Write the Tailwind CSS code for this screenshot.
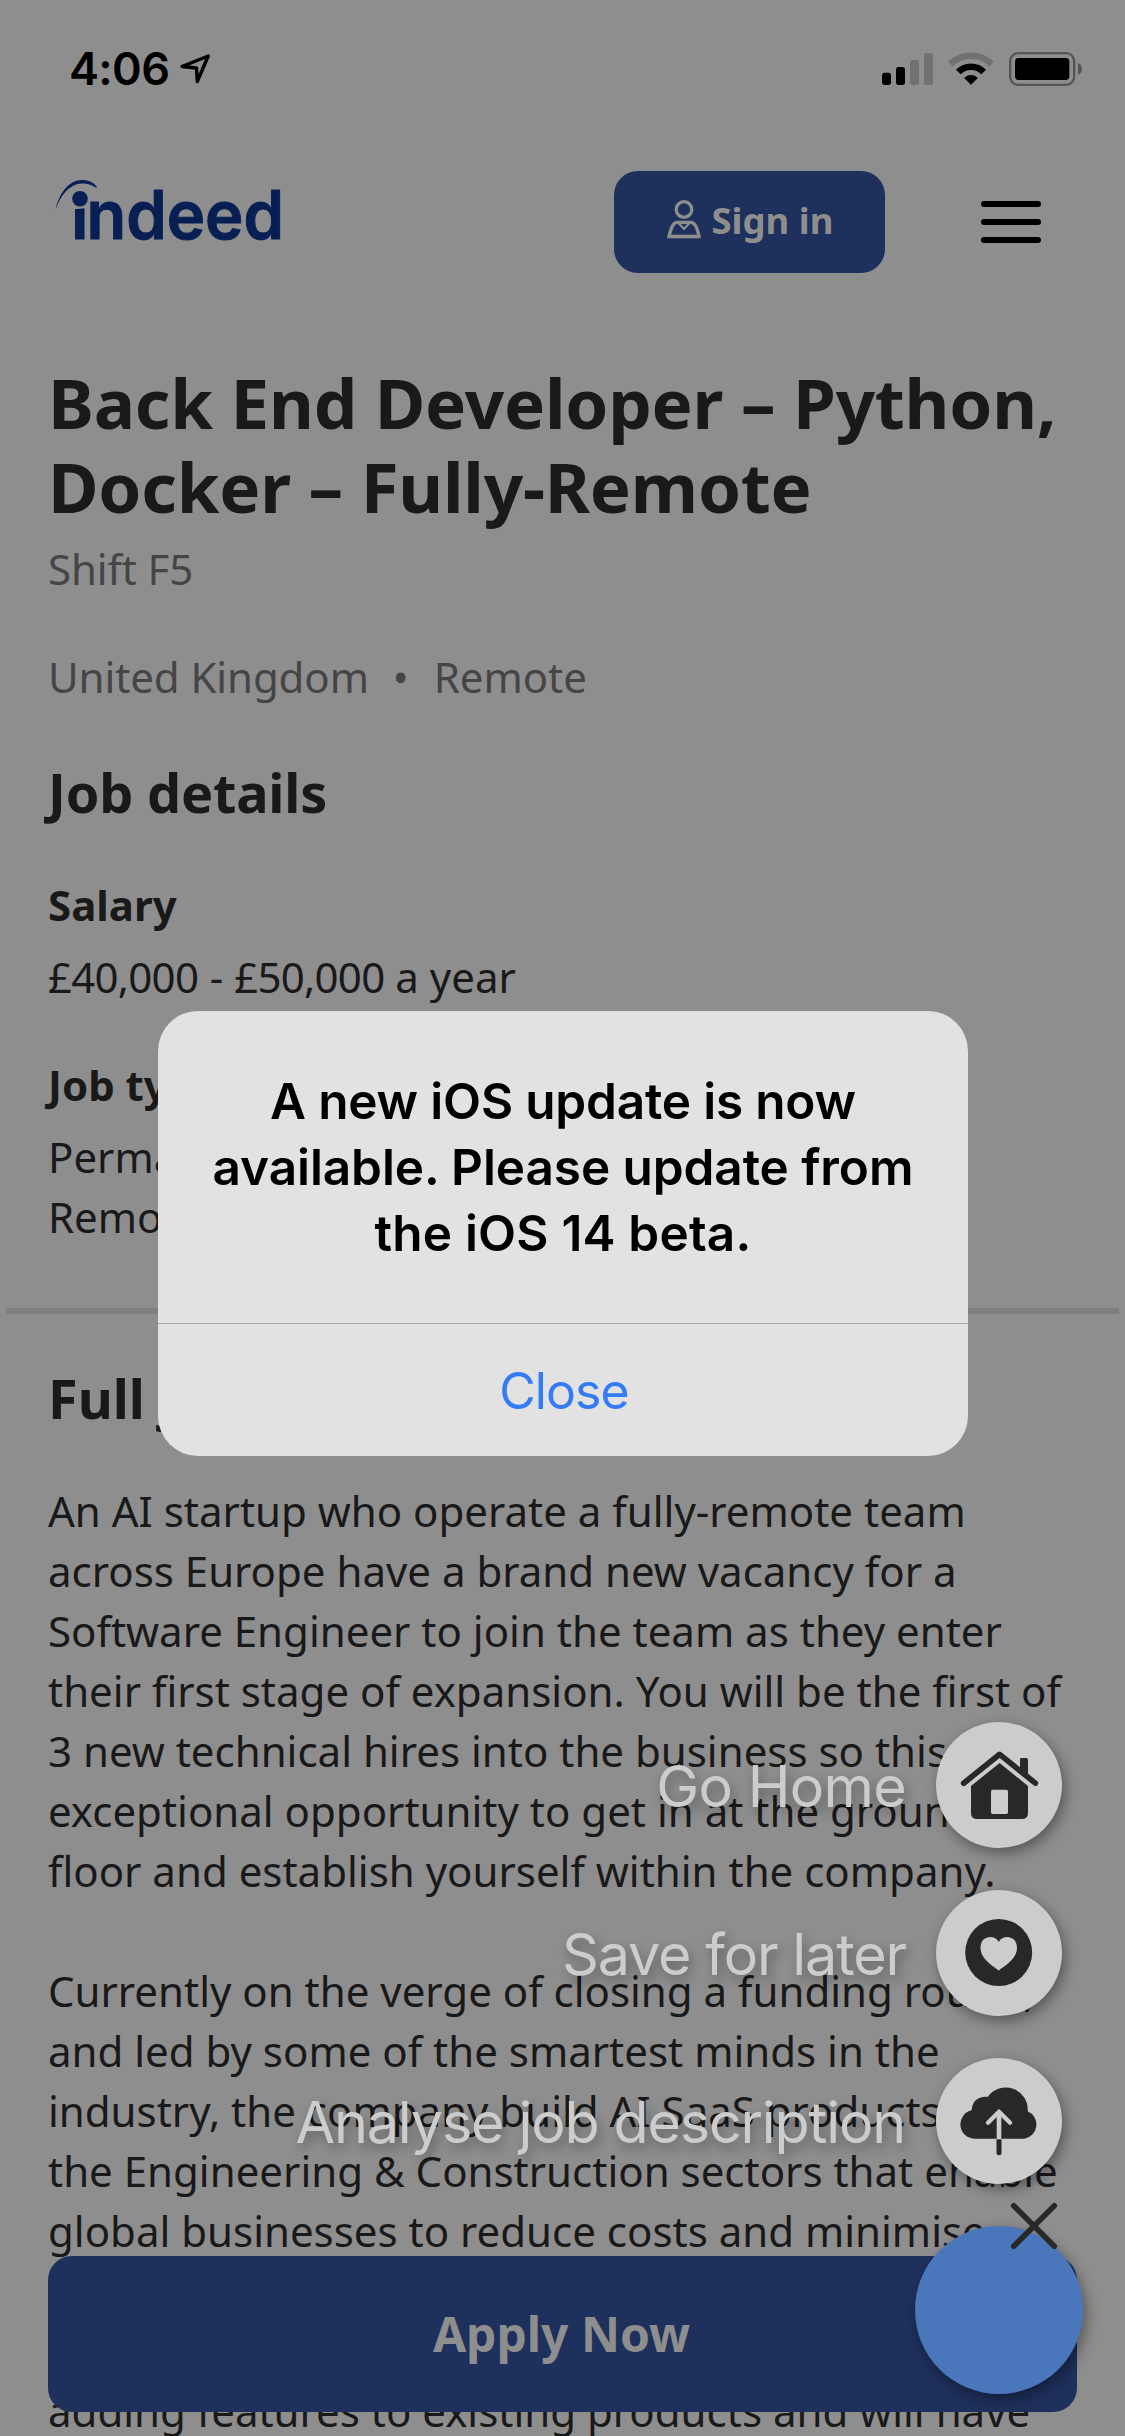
<!DOCTYPE html>
<html lang="en">
<head>
<meta charset="utf-8">
<title>Back End Developer – Python, Docker – Fully-Remote</title>
<script src="https://cdn.jsdelivr.net/npm/@tailwindcss/browser@4"></script>
</head>
<body class="bg-[#8e8e8e]">
<div class="relative h-[2436px] w-[1125px] overflow-hidden bg-[#8e8e8e] font-['Noto_Sans',sans-serif] text-[42px] leading-[60px] text-[#191919]">

  <!-- Status bar -->
  <div class="flex h-[138px] items-center pl-[69px] pr-[25px] font-['Inter',sans-serif] text-black">
    <span class="w-[107px] text-[45px] font-semibold tracking-[-0.6px]">4:06</span>
    <svg class="h-9 w-9" viewBox="176 51 36 36" fill="none" stroke="#000" stroke-width="3.4" stroke-linejoin="round"><path d="M182 66.5 208.2 56 197.3 81.5 196.5 68Z"/></svg>
    <svg class="ml-auto mt-[2px] h-[60px] w-[240px]" viewBox="0 0 720 180">
      <rect x="66" y="98" width="27" height="37" rx="8"/>
      <rect x="108" y="81" width="27" height="54" rx="8"/>
      <g fill="#717171"><rect x="150" y="60" width="27" height="75" rx="8"/><rect x="192" y="39" width="27" height="96" rx="8"/></g>
      <path d="M271 72A90 90 0 0 1 395 72" fill="none" stroke="#717171" stroke-width="20"/>
      <path d="M295 96A54 54 0 0 1 371 96" fill="none" stroke="#000" stroke-width="20"/>
      <path d="M333 133 314 114A28 28 0 0 1 352 114Z" stroke="#000" stroke-width="3" stroke-linejoin="round"/>
      <rect x="450.500" y="39.500" width="192" height="95" rx="24" fill="none" stroke="#555" stroke-width="7"/>
      <rect x="465" y="54" width="163" height="66" rx="11"/>
      <path d="M654 69C670 75 670 99 654 105Z" fill="#555"/>
    </svg>
  </div>

  <!-- Site header -->
  <header class="flex h-[168px] items-center pl-[45px] pr-[84px]">
    <svg class="-mt-6 h-[90px] w-[250px]" viewBox="45 165 250 90" fill="#081f53">
      <clipPath id="below-dot"><path d="M45 212 87.500 208V165H295V255H45Z"/></clipPath>
      <text y="239" clip-path="url(#below-dot)" class="font-['Inter',sans-serif] text-[67px] font-semibold" stroke="#081f53" stroke-width="1" stroke-linejoin="round"><tspan x="71">i</tspan><tspan x="86.500" textLength="197.500" lengthAdjust="spacingAndGlyphs">ndeed</tspan></text>
      <circle cx="80" cy="198.800" r="7.800"/>
      <path d="M55.500 210C59 193 69 180 82 180 89 180 95 183 97 187.500 96 189 93 184 83 183.500 70 183 60 196 55.500 210Z"/>
    </svg>
    <button class="ml-[319px] flex h-[102px] w-[271px] items-center rounded-[24px] bg-[#1e305c] pl-[53px] text-[36.5px] font-bold text-[#8e8e8e]">
      <svg class="-mt-[6px] h-[40px] w-[36px]" viewBox="667 199 36 40" fill="none" stroke="#8e8e8e" stroke-width="3.300"><circle cx="684" cy="209.500" r="7.800"/><path d="M669 236.500C671 228 673 222.500 677 222.300H691C695 222.500 697.500 228 699 236.500Z"/><path d="M678 222.500 684 229 690 222.500" stroke-width="2.200"/></svg>
      <span class="-mt-1 ml-[8.5px] whitespace-nowrap">Sign in</span>
    </button>
    <div class="ml-auto flex w-[60px] flex-col gap-[12px]">
      <div class="h-[6px] rounded-full bg-black"></div>
      <div class="h-[6px] rounded-full bg-black"></div>
      <div class="h-[6px] rounded-full bg-black"></div>
    </div>
  </header>

  <!-- Job posting -->
  <main class="flex flex-col pt-[54px]">
    <section class="flex flex-col whitespace-nowrap px-12">
      <h1 class="text-[69px] font-bold leading-[84px] tracking-[-0.2px]">Back End Developer – Python,<br>Docker – Fully-Remote</h1>
      <p class="mt-[11px] tracking-[-0.15px] text-[#454545]">Shift F5</p>
      <p class="mt-12 text-[#454545]"><span class="tracking-[-0.1px]">United Kingdom</span><span class="ml-[24px] mr-[25px]">•</span>Remote</p>
      <h2 class="mt-[49px] text-[54px] font-bold leading-[72px] tracking-[-0.2px]">Job details</h2>
      <h3 class="mt-[47px] font-bold">Salary</h3>
      <p class="mt-3"><span class="tracking-[-0.75px] [word-spacing:1.5px]">£40,000 - £50,000</span> a year</p>
      <h3 class="mt-12 font-bold">Job type</h3>
      <p class="mt-3">Permanent<br>Remote</p>
    </section>
    <div class="mx-[6px] mt-[61px] h-[6px] bg-[#7e7e7c]"></div>
    <section class="whitespace-nowrap px-12">
      <h2 class="mt-12 text-[54px] font-bold leading-[72px]">Full job description</h2>
      <p class="mt-[47px]">An AI startup who operate a fully-remote team<br>across Europe have a brand new vacancy for a<br>Software Engineer to join the team as they enter<br>their first stage of expansion. You will be the first of<br>3 new technical hires into the business so this<br>exceptional opportunity to get in at the ground<br>floor and establish yourself within the company.</p>
      <p class="mt-[60px]">Currently on the verge of closing a funding round,<br>and led by some of the smartest minds in the<br>industry, the company build AI SaaS products<br>the Engineering &amp; Construction sectors that enable<br>global businesses to reduce costs and minimise<br>&nbsp;<br>&nbsp;<br>adding features to existing products and will have</p>
    </section>
  </main>

  <!-- Sticky apply button -->
  <button class="absolute bottom-6 left-12 flex h-[156px] w-[1029px] items-center justify-center rounded-[24px] bg-[#1e305c] pr-[2px] text-[48px] font-bold text-[#8e8e8e]">Apply Now</button>

  <!-- Floating action menu -->
  <div class="absolute right-[42px] top-[1722px] flex flex-col items-end gap-[42px] font-['Inter',sans-serif] text-[57.5px] leading-[72px] text-[#ccc]">
    <div class="mr-[21px] flex items-center gap-[30px]">
      <span class="pt-px tracking-[-0.7px] [text-shadow:3px_6px_12px_rgba(0,0,0,0.35)]">Go Home</span>
      <div class="size-[126px] rounded-full bg-[#ccc] shadow-[3px_5px_14px_rgba(0,0,0,0.4)]">
        <svg class="size-full" viewBox="33 36 378 378" fill="#282828">
          <path d="M285 148Q285 144 289 144H304Q309 144 309 149V195L285 176Z"/>
          <path d="M116 219.500 224 133 331 219.500" fill="none" stroke="#282828" stroke-width="17" stroke-linecap="round" stroke-linejoin="round"/>
          <path d="M224 159 309 228V308Q309 327 290 327H157Q138 327 138 308V228Z"/>
          <rect x="198" y="239" width="51" height="73" rx="5" fill="#ccc"/>
        </svg>
      </div>
    </div>
    <div class="mr-[21px] flex items-center gap-[30px]">
      <span class="pt-px tracking-[-1.2px] [text-shadow:3px_6px_12px_rgba(0,0,0,0.35)]">Save for later</span>
      <div class="size-[126px] rounded-full bg-[#ccc] shadow-[3px_5px_14px_rgba(0,0,0,0.4)]">
        <svg class="size-full" viewBox="0 0 126 126"><circle cx="62.700" cy="62.500" r="33.500" fill="#282828"/><path d="M62.700 52C59 44.500 44.500 45 44.500 58 44.500 68 54 74 62.700 80.500 71.500 74 81 68 81 58 81 45 66.500 44.500 62.700 52Z" fill="#ccc"/></svg>
      </div>
    </div>
    <div class="mr-[21px] flex items-center gap-[31px]">
      <span class="pt-px tracking-[-1.2px] [text-shadow:3px_6px_12px_rgba(0,0,0,0.35)]">Analyse job description</span>
      <div class="size-[126px] rounded-full bg-[#ccc] shadow-[3px_5px_14px_rgba(0,0,0,0.4)]">
        <svg class="size-full" viewBox="33 24 378 378" fill="none" stroke-linecap="round" stroke-linejoin="round">
          <path d="M148 266A43 43 0 0 1 140 181C140 153 164 137 188 141A66 66 0 0 1 308 184A43 43 0 0 1 298 266Z" fill="#282828"/>
          <path d="M222 270V308" stroke="#282828" stroke-width="15"/>
          <path d="M222 268V190" stroke="#ccc" stroke-width="14" stroke-linecap="butt"/>
          <path d="M189 218 222 185 255 218" stroke="#ccc" stroke-width="13"/>
        </svg>
      </div>
    </div>
    <div class="relative size-[168px] rounded-full bg-[#4a77bc] shadow-[3px_5px_14px_rgba(0,0,0,0.4)]">
      <svg class="absolute -top-6 left-[95px] size-[48px]" viewBox="0 0 48 48" stroke="#282828" stroke-width="5.500" stroke-linecap="round"><path d="M3.700 3.700 44.300 44.300M44.300 3.700 3.700 44.300"/></svg>
    </div>
  </div>

  <!-- Alert dialog -->
  <div class="absolute left-[158px] top-[1011px] flex h-[445px] w-[810px] flex-col rounded-[40px] bg-[#e2e2e2] text-center font-['Inter',sans-serif] text-[49.5px] leading-[66px] text-black">
    <p class="h-[312px] whitespace-nowrap pt-[57px] font-semibold tracking-[-0.18px]">A new iOS update is now<br><span class="tracking-[-0.08px]">available. Please update from</span><br><span class="tracking-[0.2px]">the iOS 14 beta.</span></p>
    <button class="flex grow items-center justify-center border-t border-[#a6a6a6] pl-[2px] pt-[2px] text-[50px] tracking-[-0.9px] text-[#347bf6]">Close</button>
  </div>
</div>
</body>
</html>
